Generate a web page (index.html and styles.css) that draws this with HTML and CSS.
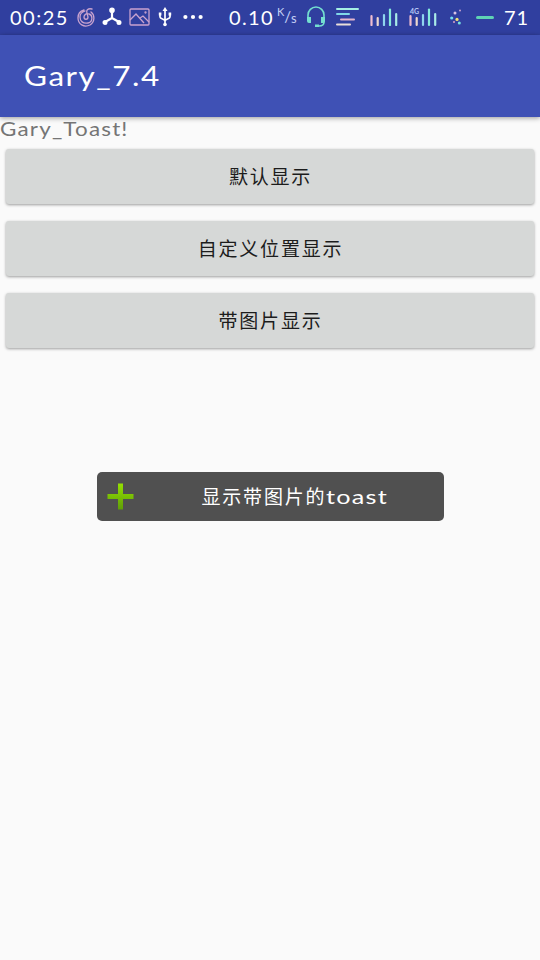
FILE: index.html
```
<!DOCTYPE html>
<html lang="zh">
<head>
<meta charset="utf-8">
<title>Gary_7.4</title>
<link rel="stylesheet" href="styles.css">
</head>
<body>
<header class="status">
  <div class="left">
    <span class="clock">00:25</span>
    <svg class="spiral" width="18" height="20" viewBox="0 0 18 20" fill="none" stroke="#c9a3cf" stroke-width="1.3" stroke-linecap="round"><path d="M15 2C11 1 9 3 10 6l1 4c0 3-4 3-4 0 0-2 2-4 5-3 4 1 4 8-1 9-5 1-8-2-8-6 0-3 2-5 5-6M14 5c4 3 4 10-1 13-6 3-12-1-12-7 0-4 2-7 6-8"/></svg>
    <svg class="hub" width="20" height="20" viewBox="0 0 20 20" fill="#fff" stroke="#fff" stroke-width="2.2"><path d="M10 4v7M10 11l-7 4M10 11l7 4" fill="none"/><circle cx="10" cy="3.2" r="1.7"/><circle cx="3" cy="15.4" r="1.4"/><circle cx="17" cy="15.4" r="1.4"/></svg>
    <svg class="photo" width="21" height="18" viewBox="0 0 21 18" fill="none" stroke="#c9a3cf" stroke-width="1.3"><rect x="1" y="1" width="19" height="16" rx="1"/><path d="M1 12l6-6 8 9M11 10l3-2 6 6"/><circle cx="16.5" cy="4.5" r=".5"/></svg>
    <svg class="usb" width="14" height="20" viewBox="0 0 14 20" fill="none" stroke="#fff" stroke-width="1.7"><path d="M7 3v14M2 7v3c0 2 5 2 5 4 0-2 5-2 5-4V7"/><path d="M7 0l2.5 4h-5zM.8 5.5h2.6v3H.8zM10.6 5.5h2.6v3h-2.6z" fill="#fff" stroke="none"/><circle cx="7" cy="17.5" r="1.8" fill="#fff" stroke="none"/></svg>
    <svg class="more" width="20" height="6" viewBox="0 0 20 6" fill="#fff"><circle cx="2.4" cy="3" r="2.1"/><circle cx="10" cy="3" r="2.1"/><circle cx="17.6" cy="3" r="2.1"/></svg>
  </div>
  <div class="right">
    <span class="speed">0.10</span>
    <span class="unit"><sup>K</sup><i>/</i><sub>s</sub></span>
    <svg class="phones" width="20" height="22" viewBox="0 0 20 22" fill="none" stroke="#74dfd0" stroke-width="1.6"><path d="M2 12V9a8 8 0 0 1 16 0v7c0 3-2 4-5 4"/><path d="M1 11h4v6H3a2 2 0 0 1-2-2zM15 11h4v4a2 2 0 0 1-2 2h-2zM9 18.500h4v2.500H9z" fill="#74dfd0" stroke="none"/></svg>
    <svg class="lines" width="24" height="20" viewBox="0 0 24 20" stroke-width="2" stroke-linecap="round"><path d="M2 2h21" stroke="#a5f0e4"/><path d="M2 7h12" stroke="#80d8e8"/><path d="M6 12.500h13" stroke="#e3b5cd"/><path d="M2 17.500h13" stroke="#eadfd9"/></svg>
    <svg class="bars" width="28" height="18" viewBox="0 0 28 18" stroke-width="2.2" stroke-linecap="round"><path d="M1.5 8v9" stroke="#efbdd0"/><path d="M7.7 10v7" stroke="#eed8ce"/><path d="M14 7v10" stroke="#8fd5ee"/><path d="M20 1.500V17" stroke="#86ebdc"/><path d="M26.200 6v11" stroke="#a9ebe7"/></svg>
    <svg class="bars4" width="28" height="18" viewBox="0 0 28 18" stroke-width="2.2" stroke-linecap="round"><path d="M1.5 8v9" stroke="#efbdd0"/><path d="M7.7 10v7" stroke="#eed8ce"/><path d="M14 7v10" stroke="#8fd5ee"/><path d="M20 1.500V17" stroke="#86ebdc"/><path d="M26.200 6v11" stroke="#a9ebe7"/><text class="g4" x="1" y="5.500">4G</text></svg>
    <svg class="confetti" width="12" height="16" viewBox="0 0 12 16"><circle cx="10" cy="1.500" r="1" fill="#c9a3cf"/><circle cx="5" cy="4" r="1.500" fill="#d9c2e6"/><circle cx="1.700" cy="9" r="1.600" fill="#74dff0"/><circle cx="7" cy="10.400" r="1.600" fill="#f2df78"/><circle cx="4" cy="13" r="1" fill="#d9a0c6"/><circle cx="9.300" cy="14" r="1.500" fill="#74dfe0"/></svg>
    <span class="dash"></span>
    <span class="battery">71</span>
  </div>
</header>
<div class="appbar"><h1>Gary_7.4</h1></div>
<main>
  <p class="label">Gary_Toast!</p>
  <button class="btn">默认显示</button>
  <button class="btn">自定义位置显示</button>
  <button class="btn">带图片显示</button>
</main>
<div class="toast">
  <svg width="28" height="28" viewBox="0 0 28 28"><defs><linearGradient id="g" x1="0" y1="0" x2="0" y2="1"><stop offset="0" stop-color="#94e000"/><stop offset="1" stop-color="#5f9e08"/></linearGradient></defs><path d="M11 .5h5V11h10.500v5H16v10.500h-5V16H.5v-5H11z" fill="url(#g)"/></svg>
  <span class="message">显示带图片的<span class="latin">toast</span></span>
</div>
</body>
</html>
```
FILE: styles.css
```
* { box-sizing: border-box; }
body {
  margin: 0;
  height: 960px;
  overflow: hidden;
  background: #fafafa;
  font-family: Lato, "Noto Sans CJK SC", sans-serif;
}
svg { display: block; flex: none; }
.status {
  height: 35px;
  background: #303f9f;
  color: #fff;
  display: flex;
}
.left, .right { display: flex; align-items: center; height: 34px; white-space: nowrap; }
.left { width: 229px; padding-left: 10px; }
.clock { width: 67px; font-size: 20px; letter-spacing: 1.5px; }
.hub { margin-left: 7px; }
.photo { margin-left: 7px; }
.usb { margin-left: 8px; }
.more { margin-left: 11px; }
.speed { width: 48px; font-size: 20px; letter-spacing: 1.4px; }
.unit { width: 30px; display: flex; font-size: 11px; line-height: 12px; color: #c5d0f5; }
.unit sup, .unit sub, .unit i { font-size: inherit; line-height: inherit; vertical-align: baseline; font-style: normal; }
.unit sup { margin-top: -4px; }
.unit i { font-size: 15px; }
.unit sub { margin-top: 2px; font-size: 13px; }
.phones { margin-left: -1px; }
.lines { margin-left: 9px; }
.bars { margin-left: 11px; }
.bars4 { margin-left: 11px; overflow: visible; }
.g4 { font: 700 7px Lato, sans-serif; fill: #b9c9f5; stroke: none; }
.confetti { margin-left: 13px; }
.dash { width: 18px; height: 3px; margin-left: 14px; border-radius: 2px; background: #5fd3b4; }
.battery { margin-left: 10px; font-size: 20px; letter-spacing: 1px; }
.appbar {
  height: 82px;
  padding-left: 24px;
  display: flex;
  align-items: center;
  background: #3f51b5;
  box-shadow: 0 1px 5px rgba(0, 0, 0, .4);
}
h1 {
  margin: -2px 0 0;
  color: #fff;
  font-size: 27px;
  font-weight: 400;
  letter-spacing: 1.3px;
  transform: scaleX(1.165);
  transform-origin: left;
}
.label {
  align-self: flex-start;
  margin: 0 0 8px;
  height: 24px;
  line-height: 24px;
  font-size: 19px;
  letter-spacing: 1px;
  color: #757575;
  transform: scaleX(1.18);
  transform-origin: left;
}
main { display: flex; flex-direction: column; }
.btn {
  margin: 0 6px 17px;
  height: 55px;
  padding: 0 0 3px 1px;
  border: 0;
  border-radius: 3px;
  background: #d6d8d7;
  box-shadow: 0 1px 3px rgba(0, 0, 0, .38);
  color: #1c1c1c;
  font: 400 19px "Noto Sans CJK SC", sans-serif;
  letter-spacing: 1.8px;
}
.toast {
  width: 347px;
  height: 49px;
  margin: 107px auto 0;
  padding-left: 10px;
  display: flex;
  align-items: center;
  border-radius: 5px;
  background: #505050;
  color: #fff;
}
.message { margin: -3px 0 0 67px; font: 400 19px "Noto Sans CJK SC", sans-serif; letter-spacing: 1.8px; white-space: nowrap; }
.latin {
  display: inline-block;
  font: 400 20px Lato, sans-serif;
  letter-spacing: 1px;
  transform: scaleX(1.26);
  transform-origin: left;
}
```
